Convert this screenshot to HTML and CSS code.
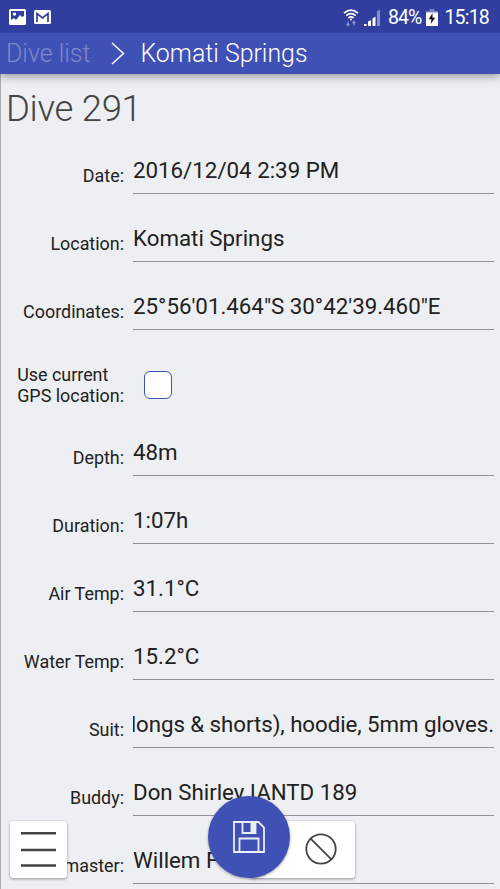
FILE: index.html
```html
<!DOCTYPE html>
<html lang="en">
<head>
<meta charset="utf-8">
<title>Dive 291</title>
<link rel="stylesheet" href="styles.css">
</head>
<body>
<div class="status">
  <div class="status-left">
    <svg width="17" height="16" viewBox="0 0 17 16"><path fill="#fff" fill-rule="evenodd" d="M1.500 0h14Q17 0 17 1.500v13Q17 16 15.500 16h-14Q0 16 0 14.500v-13Q0 0 1.500 0zM2 2v9l3-2 2 2 4-5 2 2 2-1V2zM5.500 3.500a1.600 1.600 0 1 1-.1 0z"/></svg>
    <svg width="17" height="14" viewBox="0 0 17 14"><rect width="17" height="14" rx="1.500" fill="#fff"/><path d="M3 12V3.500l5.500 4.300L14 3.500V12" fill="none" stroke="#303f9f" stroke-width="1.700"/></svg>
  </div>
  <div class="status-right">
    <svg class="wifi" width="16" height="18" viewBox="0 0 16 18" fill="none" stroke="#fff" stroke-width="1.700"><path d="M1 4.200Q8-2 15 4.200M3.200 6.700Q8 2.600 12.800 6.700M5.400 9Q8 6.800 10.600 9"/><circle cx="8" cy="10.500" r="1" fill="#fff" stroke="none"/><path d="M5 12.500v4M3.600 15l1.400 1.500L6.400 15M11 16.500v-4M9.600 14l1.400-1.500 1.400 1.500" stroke="#929bd0" stroke-width="1.200"/></svg>
    <svg class="signal" width="17" height="17" viewBox="0 0 17 17"><path fill="#fff" d="M0 15h2.500v2H0zM4 12.500l3-1.500v6H4zM8.500 9.500l3-2V17h-3z"/><path fill="#8790ca" d="m13 2.500 3-2V17h-3z"/></svg>
    <span class="percent">84%</span>
    <svg class="battery" width="12" height="17" viewBox="0 0 12 17"><path fill="#7983c3" d="M3.500 0h5v2H12v2H0V2h3.500z"/><path fill="#fff" d="M0 3.500h12V17H0z"/><path fill="#111" d="M6.500 4 2.800 10.300h2.700L4.700 15l4.500-6.300H6.500z"/></svg>
    <span class="clock">15:18</span>
  </div>
</div>
<header class="bar">
  <span class="back">Dive list</span>
  <svg class="chevron" width="14" height="23" viewBox="0 0 14 23"><path d="m1 1 11.500 10.500L1 22" fill="none" stroke="#fff" stroke-width="1.500"/></svg>
  <span class="here">Komati Springs</span>
</header>
<main class="page">
  <h1>Dive 291</h1>
  <div class="row"><label>Date:</label><div class="value">2016/12/04 2:39 PM</div></div>
  <div class="row"><label>Location:</label><div class="value">Komati Springs</div></div>
  <div class="row"><label>Coordinates:</label><div class="value">25°56'01.464"S 30°42'39.460"E</div></div>
  <div class="row check"><label>Use current<br>GPS location:</label><div class="box"></div></div>
  <div class="row"><label>Depth:</label><div class="value">48m</div></div>
  <div class="row"><label>Duration:</label><div class="value">1:07h</div></div>
  <div class="row"><label>Air Temp:</label><div class="value">31.1°C</div></div>
  <div class="row"><label>Water Temp:</label><div class="value">15.2°C</div></div>
  <div class="row"><label>Suit:</label><div class="value end">longs &amp; shorts), hoodie, 5mm gloves.</div></div>
  <div class="row"><label>Buddy:</label><div class="value">Don Shirley IANTD 189</div></div>
  <div class="row"><label>master:</label><div class="value">Willem F</div></div>
</main>
<div class="menu"><svg width="36" height="36" viewBox="0 0 36 36"><path d="M0 2.300h35M0 19h35M0 34.500h35" stroke="#444" stroke-width="2.500"/></svg></div>
<div class="cancel"><svg width="32" height="32" viewBox="0 0 32 32" fill="none" stroke="#444" stroke-width="1.800"><circle cx="16" cy="16" r="14.700"/><path d="m5.600 5.600 20.800 20.800"/></svg></div>
<div class="save"><svg width="32" height="32" viewBox="0 0 32 32" fill="none" stroke="#eceef8" stroke-width="1.800"><path d="M1 1h24.500L31 6.500V31H1zM6.500 31V17.500h19V31M9.500 1v11h13V1"/><path fill="#eceef8" stroke="none" d="M17.500 1.500h5V12h-5z"/></svg></div>
</body>
</html>
```
FILE: styles.css
```css
* { box-sizing: border-box; }
html, body { height: 100%; }
body {
  margin: 0;
  position: relative;
  display: flex;
  flex-direction: column;
  overflow: hidden;
  background: #eeeff2;
  color: #212121;
  font-family: Roboto, sans-serif;
}
svg { display: block; flex: none; }
.status {
  position: relative;
  z-index: 1;
  flex: none;
  height: 33px;
  padding: 0 11px 0 9px;
  display: flex;
  justify-content: space-between;
  background: #303f9f;
  color: #fff;
}
.status-left { display: flex; gap: 8px; align-items: center; }
.status-right { display: flex; align-items: center; font-size: 19.5px; line-height: 33px; padding-top: 2px; }
.signal { margin: 0 7px 0 5px; }
.percent { letter-spacing: -0.9px; }
.clock { letter-spacing: -0.8px; }
.battery { margin: 0 6px 0 5px; }
.bar {
  position: relative;
  flex: none;
  height: 41px;
  padding: 0 6px;
  display: flex;
  align-items: center;
  background: #3f51b5;
  color: #fff;
  font-size: 24.9px;
  font-weight: 300;
  box-shadow: 0 2px 9px rgba(0, 0, 0, .4);
}
.back { color: #7c88cc; }
.chevron { margin: 0 15px 0 21px; }
.page {
  flex: 1;
  min-height: 0;
  overflow: hidden;
  padding: 0 6px 0 0;
  border-left: 1px solid #aaabad;
}
h1 {
  margin: 0;
  height: 71px;
  padding-left: 5px;
  font-size: 36.5px;
  line-height: 69px;
  font-weight: 300;
  letter-spacing: -0.3px;
  color: #444;
}
.row {
  display: grid;
  grid-template-columns: 123px 1fr;
  column-gap: 9px;
  height: 68px;
  padding-top: 1px;
}
label {
  justify-self: end;
  font-size: 17.9px;
  line-height: 21px;
  padding-top: 19px;
  white-space: nowrap;
}
.value {
  height: 48px;
  border-bottom: 1px solid #919295;
  font-size: 22.3px;
  line-height: 48px;
  white-space: nowrap;
  overflow: hidden;
}
.end { display: flex; justify-content: flex-end; letter-spacing: -0.06px; }
.check { height: 78px; }
.check label { padding-top: 14px; }
.box {
  width: 28px;
  height: 28px;
  margin: 21px 0 0 11px;
  border: 1px solid #3f51b5;
  border-radius: 6px;
  background: #fff;
}
.menu, .cancel {
  position: absolute;
  background: #fff;
  border-radius: 3px;
  box-shadow: 0 1px 3px rgba(0, 0, 0, .4);
}
.menu { left: 10px; top: 821px; width: 57px; height: 57px; padding: 10px 11px; }
.cancel { left: 250px; top: 821px; width: 105px; height: 57px; padding: 12px 0 0 55px; }
.save {
  position: absolute;
  left: 208px;
  top: 796px;
  width: 82px;
  height: 82px;
  display: flex;
  align-items: center;
  justify-content: center;
  border-radius: 50%;
  background: #3f51b5;
  box-shadow: 0 1px 3px rgba(0, 0, 0, .35);
}
```
